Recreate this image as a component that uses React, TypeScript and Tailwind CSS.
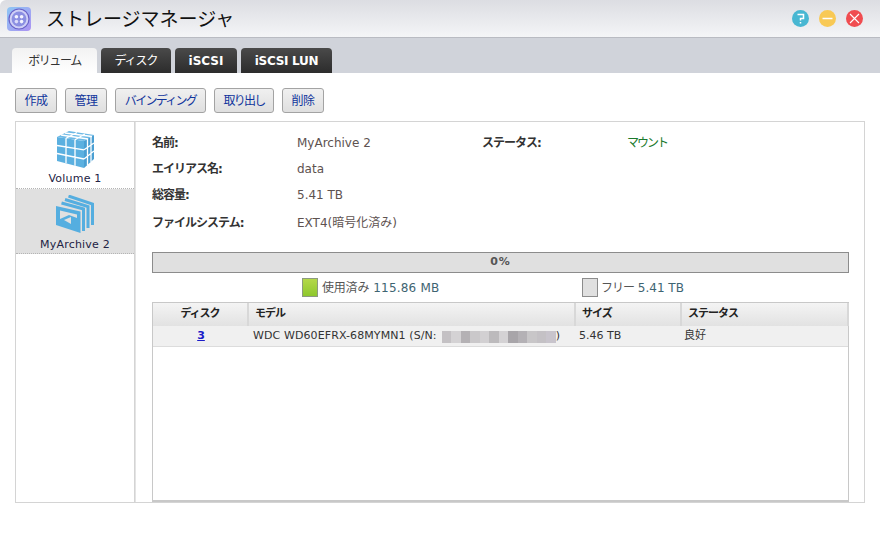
/**
 * StorageManager — volume tab of the NAS storage window
 */
import type { ReactNode } from "react";

const FONT = "[font-family:'DejaVu_Sans','Noto_Sans_CJK_JP',sans-serif]";

const TABS = [
  { label: "ボリューム", className: "w-[85px] pt-[1px] text-[12px] tracking-[-1.4px]", active: true },
  { label: "ディスク", className: "w-[70px] pt-[1px] text-[12px] tracking-[-1px] font-normal" },
  { label: "iSCSI", className: "w-[62px] pt-[1px] text-[12px] font-bold" },
  { label: "iSCSI LUN", className: "w-[91px] pt-[1px] text-[12px] font-bold tracking-[-0.3px]" },
];

const ACTIONS = [
  { label: "作成", className: "w-[42px] tracking-[-0.5px]" },
  { label: "管理", className: "w-[42px] tracking-[-0.5px]" },
  { label: "バインディング", className: "w-[91px] tracking-[-1.7px]" },
  { label: "取り出し", className: "w-[60px] tracking-[-1.7px]" },
  { label: "削除", className: "w-[42px] tracking-[-0.5px]" },
];

const SERIAL_SHADES = [
  "bg-[#c4c1c4]", "bg-[#d4d2d4]", "bg-[#b4b1b4]", "bg-[#cac8ca]", "bg-[#d2d0d2]", "bg-[#bcbabc]",
  "bg-[#d4d2d4]", "bg-[#a8a5a9]", "bg-[#b4b1b5]", "bg-[#c8c6c8]", "bg-[#c4c1c5]", "bg-[#c8c4cc]",
];

function AppLogo() {
  return (
    <svg width="24" height="24" viewBox="0 0 24 24">
      <defs>
        <linearGradient id="logoBg" x1="0" y1="0" x2="1" y2="1">
          <stop offset="0" stopColor="#8cc6f4" />
          <stop offset="1" stopColor="#ac92f2" />
        </linearGradient>
      </defs>
      <rect width="24" height="24" rx="4" fill="url(#logoBg)" />
      <circle cx="12" cy="12" r="10" fill="#cfd0f6" stroke="#6a62c8" strokeWidth="1.2" />
      <circle cx="12" cy="12" r="7.4" fill="#8b8fe2" />
      <circle cx="9.4" cy="9.8" r="1.8" fill="#f4f4ff" />
      <circle cx="14.6" cy="9.8" r="1.8" fill="#f4f4ff" />
      <circle cx="9.4" cy="14.6" r="1.8" fill="#dcdcfa" />
      <circle cx="14.6" cy="14.6" r="1.8" fill="#f4f4ff" />
    </svg>
  );
}

function WindowButtons() {
  return (
    <div className="flex gap-[10px]">
      <svg width="17" height="17" viewBox="0 0 17 17">
        <circle cx="8.5" cy="8.5" r="8.5" fill="#48b7d2" />
        <path d="M5.5 4.5h6v4h-3v2M8.5 12v1.5" fill="none" stroke="#fff" strokeWidth="1.5" />
      </svg>
      <svg width="17" height="17" viewBox="0 0 17 17">
        <circle cx="8.5" cy="8.5" r="8.5" fill="#f8c955" />
        <path d="M3.5 8.5h10" stroke="#fff" strokeWidth="1.5" />
      </svg>
      <svg width="17" height="17" viewBox="0 0 17 17">
        <circle cx="8.5" cy="8.5" r="8.5" fill="#f04c50" />
        <path d="M4 4l9 9M13 4l-9 9" stroke="#fff" strokeWidth="1.1" />
      </svg>
    </div>
  );
}

function CubeIcon() {
  return (
    <svg width="37" height="37" viewBox="0 0 37 37">
      <path d="M0 6L27 10V37L0 30Z" fill="#5bb0e0" />
      <path d="M0 6L12 0L37 4L27 10Z" fill="#6cb9e6" />
      <path d="M27 10L37 4V28L27 37Z" fill="#4a9fd3" />
      <g stroke="#fff" strokeWidth="1.3" fill="none">
        <path d="M9 7.3V32.3M18 8.7V34.7M0 14.5L27 18.8M0 22.5L27 28" />
        <path d="M30.5 8V34M34 6V31M27 18.8L37 12M27 28L37 20" />
        <path d="M4 4L31 8M8 2L35 5.5M9 7.3L20 1.5M18 8.7L28 3" />
      </g>
    </svg>
  );
}

function ArchiveIcon() {
  return (
    <svg width="39" height="38" viewBox="0 0 39 38">
      <path
        d="M0 11L24.5 16.5V38L0 30ZM4 15.5L21 19.5V23L13 20L4 24ZM8 25L15 22V29Z"
        fill="#55aee0"
        fillRule="evenodd"
      />
      <g fill="none" stroke="#55aee0" strokeWidth="3">
        <path d="M12.5 1L36.5 9V30" />
        <path d="M9 4.5L32 11.5V33" />
        <path d="M5.5 8L27.5 14V36" />
      </g>
    </svg>
  );
}

function SideItem({ icon, label, className }: { icon: ReactNode; label: string; className: string }) {
  return (
    <div className={`flex flex-col items-center border-b border-dotted border-[#b4b4b4] ${className}`}>
      <div className="flex h-[40px] items-center">{icon}</div>
      <span className="text-[11px] leading-[14px] tracking-[0.2px] text-[#222244]">{label}</span>
    </div>
  );
}

function Detail({ label, children, className = "" }: { label: string; children: ReactNode; className?: string }) {
  return (
    <div className={`flex items-center text-[12px] leading-[16px] ${className}`}>
      <span className="w-[145px] font-bold tracking-[-1px] text-[#333]">{label}</span>
      <span className="text-[#5e5250]">{children}</span>
    </div>
  );
}

function HeaderCell({ width, center, children }: { width: string; center?: boolean; children: ReactNode }) {
  return (
    <div
      className={`flex h-full shrink-0 items-center border-r-2 border-[#d8d8d8] text-[11px] font-bold tracking-[-1px] text-[#222] ${width} ${
        center ? "justify-center" : "pl-[6px]"
      }`}
    >
      {children}
    </div>
  );
}

export default function App() {
  return (
    <div className={`flex h-[560px] w-[880px] flex-col overflow-hidden bg-white ${FONT}`}>
      {/* Title bar */}
      <div className="flex h-[38px] shrink-0 items-center justify-between rounded-tl-[6px] border-b border-[#b9bbc2] bg-gradient-to-b from-[#dcdde2] to-[#f4f5f7] pl-[7px] pr-[17px]">
        <div className="flex items-center gap-[15px]">
          <AppLogo />
          <span className="text-[19px] leading-[24px] text-[#111]">ストレージマネージャ</span>
        </div>
        <WindowButtons />
      </div>

      {/* Tabs */}
      <div className="flex h-[35px] shrink-0 items-end gap-[4px] bg-[#d0d3da] pl-[12px]">
        {TABS.map((tab) => (
          <div
            key={tab.label}
            className={`flex h-[25px] items-center justify-center rounded-t-[4px] ${tab.className} ${
              tab.active
                ? "bg-gradient-to-b from-[#f2f2f2] to-white text-[#333]"
                : "bg-gradient-to-b from-[#4a4a4a] to-[#2c2c2c] text-white"
            }`}
          >
            {tab.label}
          </div>
        ))}
      </div>

      {/* Toolbar */}
      <div className="flex h-[48px] shrink-0 items-start gap-[8px] pl-[15px] pt-[15px]">
        {ACTIONS.map((action) => (
          <button
            key={action.label}
            className={`flex h-[25px] items-center justify-center rounded-[3px] border border-[#a3a3a3] bg-gradient-to-b from-[#f0f0f0] to-[#dfdfdf] text-[12px] text-[#10349c] ${action.className}`}
          >
            {action.label}
          </button>
        ))}
      </div>

      {/* Body */}
      <div className="ml-[15px] flex h-[382px] w-[850px] shrink-0 border border-[#d4d4d4]">
        <div className="w-[119px] shrink-0 border-r border-[#d4d4d4]">
          <SideItem icon={<CubeIcon />} label="Volume 1" className="h-[67px] pt-[7px] [&>span]:mt-[3px]" />
          <SideItem icon={<ArchiveIcon />} label="MyArchive 2" className="h-[65px] bg-[#e0e0e0] pt-[5px] [&>span]:mt-[4px]" />
        </div>

        <div className="flex min-w-0 flex-1 flex-col border-l border-[#e4e4e4] pl-[16px] pr-[15px] pt-[13px]">
          <div className="flex h-[16px]">
            <Detail label="名前:" className="w-[330px]">MyArchive 2</Detail>
            <Detail label="ステータス:">
              <span className="tracking-[-2px] text-[#1b7a2c]">マウント</span>
            </Detail>
          </div>
          <Detail label="エイリアス名:" className="mt-[10px]">data</Detail>
          <Detail label="総容量:" className="mt-[10px]">5.41 TB</Detail>
          <Detail label="ファイルシステム:" className="mt-[12px]">EXT4(暗号化済み)</Detail>

          {/* Usage bar */}
          <div className="mt-[21px] flex h-[21px] shrink-0 items-center justify-center border border-[#8c8c8c] bg-[#e0e0e0] text-[11px] font-bold tracking-[0.8px] text-[#555]">
            0%
          </div>

          {/* Legend */}
          <div className="mt-[5px] flex h-[19px] shrink-0 items-center pl-[150px] text-[12px] text-[#3e6472]">
            <span className="h-[19px] w-[16px] border border-[#8c9a80] bg-gradient-to-b from-[#b4d84a] to-[#8ec82c]" />
            <span className="ml-[4px] w-[260px] tracking-[0.2px]">
              <span className="tracking-[-0.2px] text-[#555]">使用済み</span> 115.86 MB
            </span>
            <span className="h-[19px] w-[16px] border border-[#8c8c8c] bg-[#e0e0e0]" />
            <span className="ml-[3px]">
              <span className="tracking-[-1px] text-[#555]">フリー</span> 5.41 TB
            </span>
          </div>

          {/* Disk table */}
          <div className="mt-[5px] flex h-[200px] shrink-0 flex-col border border-[#c8c8c8] border-b-2">
            <div className="flex h-[23px] shrink-0 items-center bg-gradient-to-b from-[#f4f4f4] to-[#e2e2e2]">
              <HeaderCell width="w-[96px]" center>ディスク</HeaderCell>
              <HeaderCell width="w-[327px]">モデル</HeaderCell>
              <HeaderCell width="w-[106px]">サイズ</HeaderCell>
              <HeaderCell width="w-[167px]">ステータス</HeaderCell>
            </div>
            <div className="flex h-[21px] shrink-0 items-center border-b border-[#dcdcdc] bg-[#f0f0f0] pt-[1px] text-[11px] text-[#333]">
              <div className="flex w-[96px] justify-center">
                <a href="#" className="font-bold text-[#1a1ac8] underline">3</a>
              </div>
              <div className="flex w-[327px] items-center whitespace-nowrap pl-[4px] tracking-[0.1px]">
                <span>WDC WD60EFRX-68MYMN1 (S/N:</span>
                <span className="ml-[5px] flex h-[12px] w-[114px]">
                  {SERIAL_SHADES.map((shade, i) => (
                    <span key={i} className={`h-full flex-1 ${shade}`} />
                  ))}
                </span>
                <span>)</span>
              </div>
              <div className="w-[106px] pl-[3px]">5.46 TB</div>
              <div className="pl-[2px]">良好</div>
            </div>
          </div>
        </div>
      </div>
    </div>
  );
}
